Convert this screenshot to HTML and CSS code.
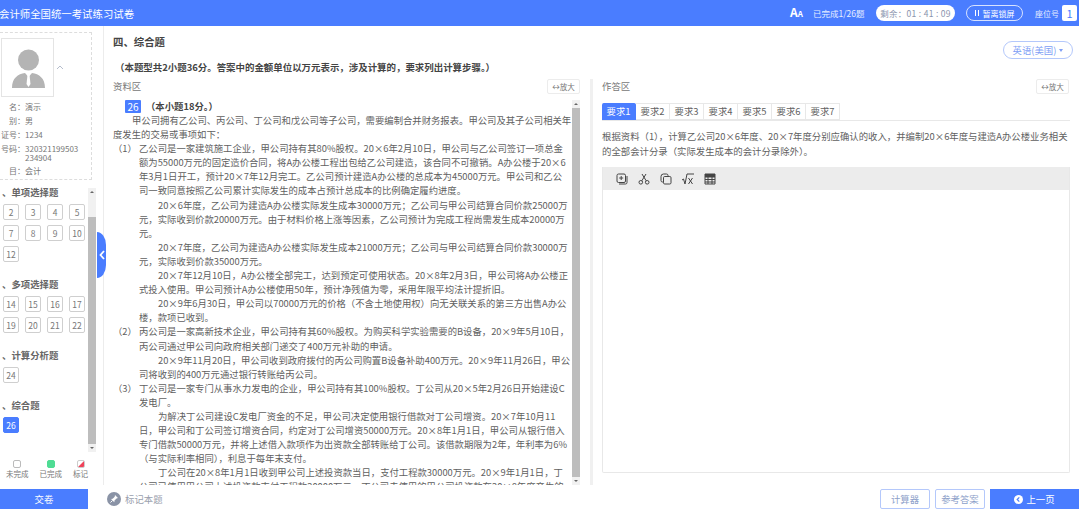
FILE: index.html
```html
<!DOCTYPE html>
<html lang="zh">
<head>
<meta charset="utf-8">
<title>会计师全国统一考试练习试卷</title>
<link rel="stylesheet" href="styles.css">
</head>
<body>
<div class="app">
  <header class="header">
    <div class="title">会计师全国统一考试练习试卷</div>
    <div class="head-right">
      <span class="font-icon">A<small>A</small></span>
      <span class="progress">已完成1/26题</span>
      <span class="timer">剩余：01 : 41 : 09</span>
      <span class="lock"><i class="pause"></i>暂离锁屏</span>
      <span class="seat">座位号</span>
      <span class="seat-no">1</span>
    </div>
  </header>
  <div class="content">
    <aside class="side">
      <div class="info">
        <div class="avatar-row">
          <div class="avatar">
            <svg width="53" height="58" viewBox="0 0 53 58">
              <circle cx="26.5" cy="21" r="10.5" fill="#b4b4b4"/>
              <path d="M10 49c0-10 6-14 13-15l3.500 4 3.500-4c7 1 13 5 13 15z" fill="#b4b4b4"/>
              <path d="M25.500 36h2l1 9-2 3-2-3z" fill="#fff"/>
            </svg>
          </div>
          <svg class="chev" width="8" height="5" viewBox="0 0 8 5"><path d="M1 4l3-3 3 3" fill="none" stroke="#b5bdcc"/></svg>
        </div>
        <div class="kv"><span class="k">名：</span><span class="v">演示</span></div>
        <div class="kv"><span class="k">别：</span><span class="v">男</span></div>
        <div class="kv"><span class="k">证号：</span><span class="v">1234</span></div>
        <div class="kv tall"><span class="k">号码：</span><span class="v">320321199503<br>234904</span></div>
        <div class="kv"><span class="k">目：</span><span class="v">会计</span></div>
      </div>
      <div class="nav-wrap">
        <div class="nav">
          <h4 class="sec">、单项选择题</h4>
          <div class="boxes">
            <span class="box">2</span><span class="box">3</span><span class="box">4</span><span class="box">5</span>
            <span class="box">7</span><span class="box">8</span><span class="box">9</span><span class="box">10</span>
            <span class="box">12</span>
          </div>
          <h4 class="sec">、多项选择题</h4>
          <div class="boxes">
            <span class="box">14</span><span class="box">15</span><span class="box">16</span><span class="box">17</span>
            <span class="box">19</span><span class="box">20</span><span class="box">21</span><span class="box">22</span>
          </div>
          <h4 class="sec">、计算分析题</h4>
          <div class="boxes"><span class="box">24</span></div>
          <h4 class="sec">、综合题</h4>
          <div class="boxes"><span class="box on">26</span></div>
        </div>
        <div class="sbar nav-sbar"><i class="up"></i><b class="thumb"></b><i class="down"></i></div>
      </div>
      <div class="legend">
        <div class="leg"><i class="dot"></i>未完成</div>
        <div class="leg"><i class="dot done"></i>已完成</div>
        <div class="leg"><i class="dot flag"></i>标记</div>
      </div>
      <button class="collapse" type="button">
        <svg width="6" height="10" viewBox="0 0 6 10"><path d="M5 1L1.500 5 5 9" fill="none" stroke="#fff" stroke-width="1.800"/></svg>
      </button>
    </aside>
    <main class="main">
      <div class="title-row">
        <h2 class="h2">四、综合题</h2>
        <span class="lang">英语(美国)<i class="caret"></i></span>
      </div>
      <p class="intro">（本题型共2小题36分。答案中的金额单位以万元表示，涉及计算的，要求列出计算步骤。）</p>
      <div class="panes">
        <section class="pane left">
          <div class="pane-head"><span>资料区</span><span class="zoom-btn">↔放大</span></div>
          <div class="doc-wrap">
            <div class="doc">
              <div class="q"><span class="qno">26</span><b>（本小题18分。）</b></div>
              <p class="lead">甲公司拥有乙公司、丙公司、丁公司和戊公司等子公司，需要编制合并财务报表。甲公司及其子公司相关年<br>度发生的交易或事项如下：</p>
              <div class="item">
                <span class="num">（1）</span>
                <div class="body">
                  乙公司是一家建筑施工企业，甲公司持有其80%股权。20×6年2月10日，甲公司与乙公司签订一项总金<br>
                  额为55000万元的固定造价合同，将A办公楼工程出包给乙公司建造，该合同不可撤销。A办公楼于20×6<br>
                  年3月1日开工，预计20×7年12月完工。乙公司预计建造A办公楼的总成本为45000万元。甲公司和乙公<br>
                  司一致同意按照乙公司累计实际发生的成本占预计总成本的比例确定履约进度。
                  <p class="ind">20×6年度，乙公司为建造A办公楼实际发生成本30000万元；乙公司与甲公司结算合同价款25000万<br>元，实际收到价款20000万元。由于材料价格上涨等因素，乙公司预计为完成工程尚需发生成本20000万<br>元。</p>
                  <p class="ind">20×7年度，乙公司为建造A办公楼实际发生成本21000万元；乙公司与甲公司结算合同价款30000万<br>元，实际收到价款35000万元。</p>
                  <p class="ind">20×7年12月10日，A办公楼全部完工，达到预定可使用状态。20×8年2月3日，甲公司将A办公楼正<br>式投入使用。甲公司预计A办公楼使用50年，预计净残值为零，采用年限平均法计提折旧。</p>
                  <p class="ind">20×9年6月30日，甲公司以70000万元的价格（不含土地使用权）向无关联关系的第三方出售A办公<br>楼，款项已收到。</p>
                </div>
              </div>
              <div class="item">
                <span class="num">（2）</span>
                <div class="body">
                  丙公司是一家高新技术企业，甲公司持有其60%股权。为购买科学实验需要的B设备，20×9年5月10日，<br>
                  丙公司通过甲公司向政府相关部门递交了400万元补助的申请。
                  <p class="ind">20×9年11月20日，甲公司收到政府拨付的丙公司购置B设备补助400万元。20×9年11月26日，甲公<br>司将收到的400万元通过银行转账给丙公司。</p>
                </div>
              </div>
              <div class="item">
                <span class="num">（3）</span>
                <div class="body">
                  丁公司是一家专门从事水力发电的企业，甲公司持有其100%股权。丁公司从20×5年2月26日开始建设C<br>
                  发电厂。
                  <p class="ind">为解决丁公司建设C发电厂资金的不足，甲公司决定使用银行借款对丁公司增资。20×7年10月11<br>日，甲公司和丁公司签订增资合同，约定对丁公司增资50000万元。20×8年1月1日，甲公司从银行借入<br>专门借款50000万元，并将上述借入款项作为出资款全部转账给丁公司。该借款期限为2年，年利率为6%<br>（与实际利率相同），利息于每年末支付。</p>
                  <p class="ind">丁公司在20×8年1月1日收到甲公司上述投资款当日，支付工程款30000万元。20×9年1月1日，丁<br>公司已使用甲公司上述投资款支付工程款20000万元。丁公司未使用的甲公司投资款在20×8年度产生的</p>
                </div>
              </div>
            </div>
            <div class="sbar doc-sbar"><i class="up"></i><b class="thumb"></b><i class="down"></i></div>
          </div>
        </section>
        <section class="pane right">
          <div class="pane-head"><span>作答区</span><span class="zoom-btn">↔放大</span></div>
          <div class="tabs">
            <span class="tab on">要求1</span><span class="tab">要求2</span><span class="tab">要求3</span><span class="tab">要求4</span><span class="tab">要求5</span><span class="tab">要求6</span><span class="tab">要求7</span>
          </div>
          <p class="ask">根据资料（1），计算乙公司20×6年度、20×7年度分别应确认的收入，并编制20×6年度与建造A办公楼业务相关<br>的全部会计分录（实际发生成本的会计分录除外）。</p>
          <div class="editor">
            <div class="toolbar">
              <svg width="12" height="12" viewBox="0 0 12 12"><rect x="1" y="1" width="8.500" height="8.500" rx="1.500" fill="none" stroke="#444"/><path d="M3 11h6.500a1.500 1.500 0 0 0 1.500-1.500V3M5.200 3v4M3.200 5h4" fill="none" stroke="#444"/></svg>
              <svg width="12" height="12" viewBox="0 0 12 12"><circle cx="2.800" cy="9.300" r="1.800" fill="none" stroke="#444"/><circle cx="9.200" cy="9.300" r="1.800" fill="none" stroke="#444"/><path d="M3.800 7.800L8 1M8.200 7.800L4 1" fill="none" stroke="#444"/></svg>
              <svg width="12" height="12" viewBox="0 0 12 12"><path d="M8 3V2.500A1.500 1.500 0 0 0 6.500 1h-3A2.500 2.500 0 0 0 1 3.500v4A1.500 1.500 0 0 0 2.500 9H3" fill="none" stroke="#444"/><rect x="3.500" y="3.500" width="7.500" height="7.500" rx="1.200" fill="none" stroke="#444"/></svg>
              <svg width="12" height="12" viewBox="0 0 12 12"><path d="M0 7l1.500-1 1.500 5L5 1h7M6.500 5l4 6M10.500 5l-4 6" fill="none" stroke="#444"/></svg>
              <svg width="12" height="12" viewBox="0 0 12 12"><path d="M1 1h10v10H1zM1 4h10M1 6.500h10M1 9h10M4 4v7M8 4v7" fill="none" stroke="#444"/><path d="M1 1h10v3H1z" fill="#444"/></svg>
            </div>
          </div>
        </section>
      </div>
    </main>
  </div>
  <footer class="footer">
    <button class="submit" type="button">交卷</button>
    <span class="mark">
      <svg width="14" height="14" viewBox="0 0 14 14"><circle cx="7" cy="7" r="7" fill="#8a93a6"/><path d="M8 3l3 3-1.500.5-2 2-.2 1.800L4 7l1.700-.3 2-2z" fill="#fff"/><path d="M5.500 8.500L3.500 10.500" stroke="#fff"/></svg>
      标记本题
    </span>
    <div class="actions">
      <button class="btn" type="button">计算器</button>
      <button class="btn" type="button">参考答案</button>
      <button class="prev" type="button">
        <svg width="9" height="9" viewBox="0 0 9 9"><circle cx="4.500" cy="4.500" r="4.500" fill="#fff"/><path d="M5.300 2.300L3.200 4.500l2.100 2.200" fill="none" stroke="#4a7dff" stroke-width="1.200"/></svg>
        上一页
      </button>
    </div>
  </footer>
</div>
</body>
</html>
```
FILE: styles.css
```css
* { box-sizing: border-box; }
html, body { margin: 0; height: 100%; overflow: hidden; background: #fff; }
body { font-family: "Noto Sans CJK SC", "Noto Sans", sans-serif; font-size: 9.4px; color: #5f5f5f; }
p, h2, h4 { margin: 0; }
i { display: block; font-style: normal; }
button { font-family: inherit; cursor: pointer; }

.app { width: 1079px; height: 510px; display: flex; flex-direction: column; overflow: hidden; }

.header { height: 26px; flex: none; background: #4a7dff; color: #fff; display: flex; align-items: center; justify-content: space-between; }
.title { font-size: 10.4px; color: #fff; margin-left: -1px; }
.head-right { display: flex; align-items: center; padding-right: 2px; font-size: 8.5px; }
.font-icon { font-size: 12px; font-weight: 700; line-height: 12px; width: 13px; }
.font-icon small { font-size: 8px; }
.progress { margin-left: 10px; width: 52px; white-space: nowrap; color: #e6edff; }
.timer { margin-left: 11px; width: 79px; height: 16px; border-radius: 8px; background: #fff; color: #8a94ad; text-align: center; line-height: 16px; white-space: nowrap; letter-spacing: .3px; }
.lock { margin-left: 11px; width: 57px; height: 16px; border: 1px solid #d7e2ff; border-radius: 8px; display: flex; align-items: center; justify-content: center; gap: 4px; white-space: nowrap; font-size: 8px; }
.pause { width: 4px; height: 6px; border-left: 1px solid #fff; border-right: 1px solid #fff; }
.seat { margin-left: 12px; width: 27px; white-space: nowrap; color: #e6edff; font-size: 8px; }
.seat-no { width: 15px; height: 16px; background: #fff; color: #4a7dff; border-radius: 2px; text-align: center; line-height: 16px; font-size: 11px; }

.content { flex: 1; min-height: 0; display: flex; }

.side { width: 104px; flex: none; position: relative; border-right: 1px solid #ececec; display: flex; flex-direction: column; }
.info { width: 92px; height: 148px; margin-top: 6px; border-right: 1px dashed #ddd; border-bottom: 1px dashed #ddd; border-top: 1px dashed #ddd; padding: 5px 0 0 1px; font-size: 8px; }
.avatar-row { display: flex; align-items: center; gap: 2px; margin-bottom: 3px; }
.avatar { width: 53px; height: 59px; border: 1px solid #e4e4e4; }
.avatar svg { display: block; }
.kv { display: flex; height: 14px; line-height: 14px; color: #777; white-space: nowrap; }
.kv.tall { height: 22px; line-height: 9px; padding-top: 2px; }
.k { width: 24px; text-align: right; flex: none; }
.v { display: block; }

.nav-wrap { height: 264px; margin-top: 8px; width: 96px; display: flex; }
.nav { width: 88px; }
.sec { font-size: 9.4px; font-weight: 700; color: #666; height: 17px; margin-top: -1px; line-height: 10px; padding-left: 2px; white-space: nowrap; }
.boxes { display: grid; grid-template-columns: repeat(4, 16px); column-gap: 6px; row-gap: 5px; padding-left: 3px; margin-bottom: 18px; }
.box { height: 16px; border: 1px solid #cfcfcf; border-radius: 2px; text-align: center; line-height: 14px; font-size: 8.5px; color: #777; background: #fff; }
.box.on { background: #4a7dff; border-color: #4a7dff; color: #fff; }

.sbar { width: 8px; flex: none; background: #f1f1f1; display: flex; flex-direction: column; }
.thumb { display: block; background: #bdbdbd; flex: 1; }
.up, .down { height: 8px; position: relative; }
.up::after, .down::after { content: ""; position: absolute; left: 2px; top: 3px; border-left: 2px solid transparent; border-right: 2px solid transparent; }
.up::after { border-bottom: 2px solid #666; }
.down::after { border-top: 2px solid #666; }
.nav-sbar .up { height: 29px; }

.legend { width: 92px; margin-top: 8px; display: flex; justify-content: space-between; padding: 0 4px 0 6px; font-size: 7.5px; color: #777; }
.leg { display: flex; flex-direction: column; align-items: center; gap: 1px; line-height: 10px; white-space: nowrap; }
.dot { width: 8px; height: 8px; border: 1px solid #bbb; border-radius: 2px; background: #fff; }
.dot.done { background: #4fdc94; border-color: #4fdc94; }
.dot.flag { background: linear-gradient(135deg, #fff 48%, #f0435a 52%); border-color: #ccc; }

.collapse { position: absolute; left: 97px; top: 206px; width: 9px; height: 46px; padding: 0; border: 0; background: #4a7dff; border-radius: 0 9px 9px 0 / 0 13px 13px 0; display: flex; align-items: center; justify-content: center; }

.main { flex: 1; min-width: 0; display: flex; flex-direction: column; }
.title-row { height: 27px; margin-top: 7px; padding: 0 6px 0 9px; display: flex; align-items: flex-start; justify-content: space-between; }
.h2 { font-size: 10.4px; font-weight: 700; color: #444; line-height: 18px; }
.lang { width: 70px; height: 18px; margin-top: 8px; border: 1px solid #b4c8fb; border-radius: 9px; color: #7f9ff5; display: flex; align-items: center; justify-content: center; gap: 3px; font-size: 9.4px; white-space: nowrap; }
.caret { border-left: 2.5px solid transparent; border-right: 2.5px solid transparent; border-top: 3px solid #7f9ff5; }
.intro { font-weight: 700; font-size: 9.45px; color: #444; margin: 0 0 0 11px; height: 19px; line-height: 14px; }

.panes { flex: 1; min-height: 0; display: flex; }
.pane { display: flex; flex-direction: column; min-width: 0; }
.pane.left { width: 489px; border-right: 3px solid #f0f0f0; padding-left: 9px; }
.pane.right { flex: 1; padding: 0 9px; }
.pane-head { height: 21px; display: flex; align-items: flex-start; justify-content: space-between; color: #777; line-height: 14px; }
.zoom-btn { width: 33px; height: 15px; border: 1px solid #ececec; border-radius: 2px; font-size: 7.5px; text-align: center; line-height: 13px; color: #777; white-space: nowrap; }
.left .pane-head { padding-right: 10px; }
.right .pane-head { padding-right: 1px; }

.doc-wrap { flex: 1; min-height: 0; display: flex; padding-right: 10px; }
.doc { width: 459px; overflow: hidden; line-height: 14.1px; white-space: nowrap; font-size: 9.35px; }
.q { display: flex; align-items: center; height: 13px; margin-left: 12px; color: #444; }
.q b { margin-left: 5px; }
.qno { width: 16px; height: 13px; background: #4a7dff; color: #fff; border-radius: 1px; text-align: center; line-height: 13px; font-size: 10px; }
.lead { text-indent: 19px; }
.item { display: flex; }
.num { width: 26px; flex: none; }
.body { flex: none; }
.ind { text-indent: 19px; }

.tabs { display: flex; height: 18px; border-bottom: 1px solid #e8e8e8; margin-top: 3px; }
.tab { width: 34px; height: 17px; border: 1px solid #e8e8e8; border-left: 0; text-align: center; line-height: 15px; }
.tab.on { background: #4a7dff; color: #fff; border-color: #4a7dff; border-radius: 2px 2px 0 0; }
.ask { margin-top: 8px; line-height: 15px; white-space: nowrap; }
.editor { width: 468px; height: 306px; margin-top: 8px; border: 1px solid #e8e8e8; border-top: 0; border-radius: 0 0 2px 2px; }
.toolbar { height: 23px; background: #ececec; display: flex; align-items: center; gap: 10px; padding-left: 13px; }

.footer { height: 25px; flex: none; display: flex; align-items: center; }
.submit { width: 88px; height: 20px; padding: 0; border: 0; background: #4a7dff; color: #fff; font-size: 9.4px; margin-top: 3px; }
.mark { margin-left: 19px; display: flex; align-items: center; gap: 4px; color: #9aa0ad; margin-top: 3px; }
.actions { margin-left: auto; display: flex; gap: 5px; margin-top: 3px; }
.btn { width: 50px; height: 20px; padding: 0; border: 1px solid #b4c8fb; border-radius: 2px; background: #fff; color: #8ca0c9; font-size: 9.4px; }
.prev { width: 89px; height: 20px; padding: 0; border: 0; background: #4a7dff; color: #fff; font-size: 9.4px; display: flex; align-items: center; justify-content: center; gap: 3px; }
```
